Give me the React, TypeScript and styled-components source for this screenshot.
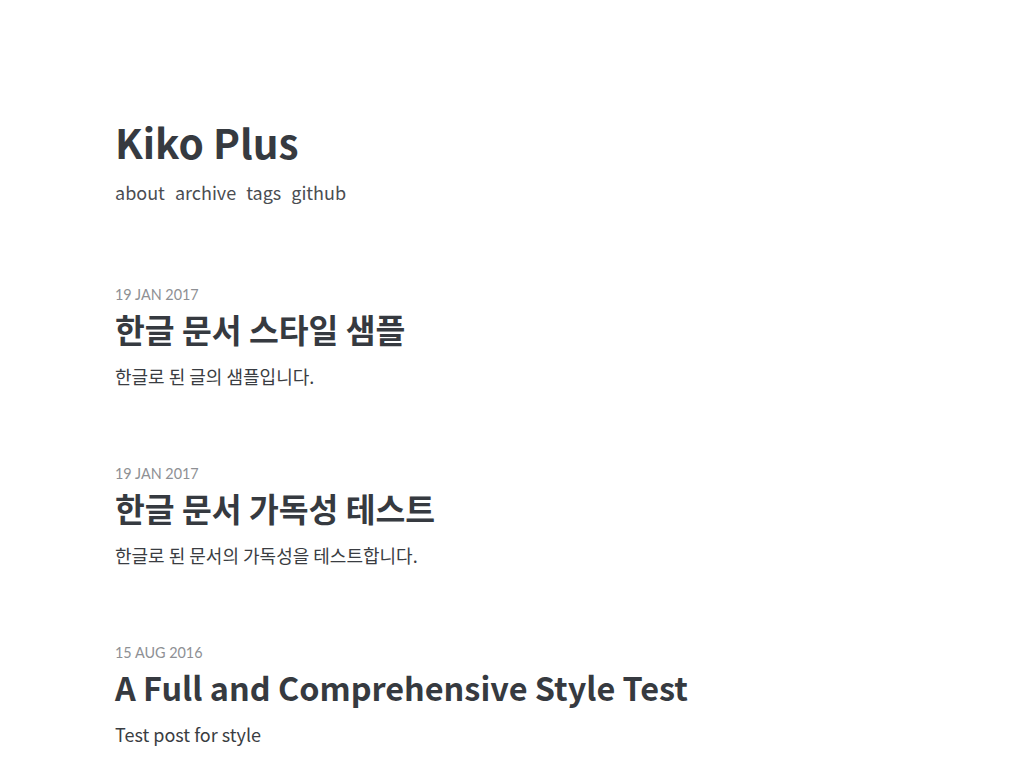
import React from "react";
import styled, { createGlobalStyle } from "styled-components";

const Global = createGlobalStyle`
  html, body { margin: 0; padding: 0; background: #fff; }
  body {
    font-family: "Noto Sans CJK KR", "Noto Sans", sans-serif;
    color: #363a40;
  }
`;

const Page = styled.div`
  padding: 110px 0 0 115px;
  display: flex;
  flex-direction: column;
`;

const Header = styled.header`
  display: flex;
  flex-direction: column;
  margin-bottom: 79px;
`;

const SiteTitle = styled.h1`
  margin: 0;
  font-size: 40.5px;
  font-weight: 700;
  line-height: 64px;
  color: #363a40;
`;

const Nav = styled.nav`
  display: flex;
  gap: 10px;
  margin-top: 4px;
`;

const NavLink = styled.a`
  font-size: 18px;
  line-height: 28px;
  color: #4a4d52;
  text-decoration: none;
`;

const Posts = styled.div`
  display: flex;
  flex-direction: column;
  gap: 74px;
`;

const Post = styled.article`
  display: flex;
  flex-direction: column;
`;

const PostDate = styled.div`
  font-family: Lato, "Noto Sans", sans-serif;
  font-size: 14.4px;
  line-height: 20px;
  color: #8e9094;
  text-transform: uppercase;
`;

const PostTitle = styled.h2`
  margin: 0;
  font-size: 32.4px;
  line-height: 48px;
  font-weight: 700;
  color: #363a40;
`;

const Excerpt = styled.p`
  margin: 9px 0 0;
  font-size: 18px;
  line-height: 28px;
  color: #3a3d42;
`;

const posts = [
  { date: "19 Jan 2017", title: "한글 문서 스타일 샘플", excerpt: "한글로 된 글의 샘플입니다." },
  { date: "19 Jan 2017", title: "한글 문서 가독성 테스트", excerpt: "한글로 된 문서의 가독성을 테스트합니다." },
  { date: "15 Aug 2016", title: "A Full and Comprehensive Style Test", excerpt: "Test post for style" },
];

export default function App() {
  return (
    <>
      <Global />
      <Page>
        <Header>
          <SiteTitle>Kiko Plus</SiteTitle>
          <Nav>
            {["about", "archive", "tags", "github"].map((l) => (
              <NavLink key={l} href="#">{l}</NavLink>
            ))}
          </Nav>
        </Header>
        <Posts>
          {posts.map((p) => (
            <Post key={p.title}>
              <PostDate>{p.date}</PostDate>
              <PostTitle>{p.title}</PostTitle>
              <Excerpt>{p.excerpt}</Excerpt>
            </Post>
          ))}
        </Posts>
      </Page>
    </>
  );
}
